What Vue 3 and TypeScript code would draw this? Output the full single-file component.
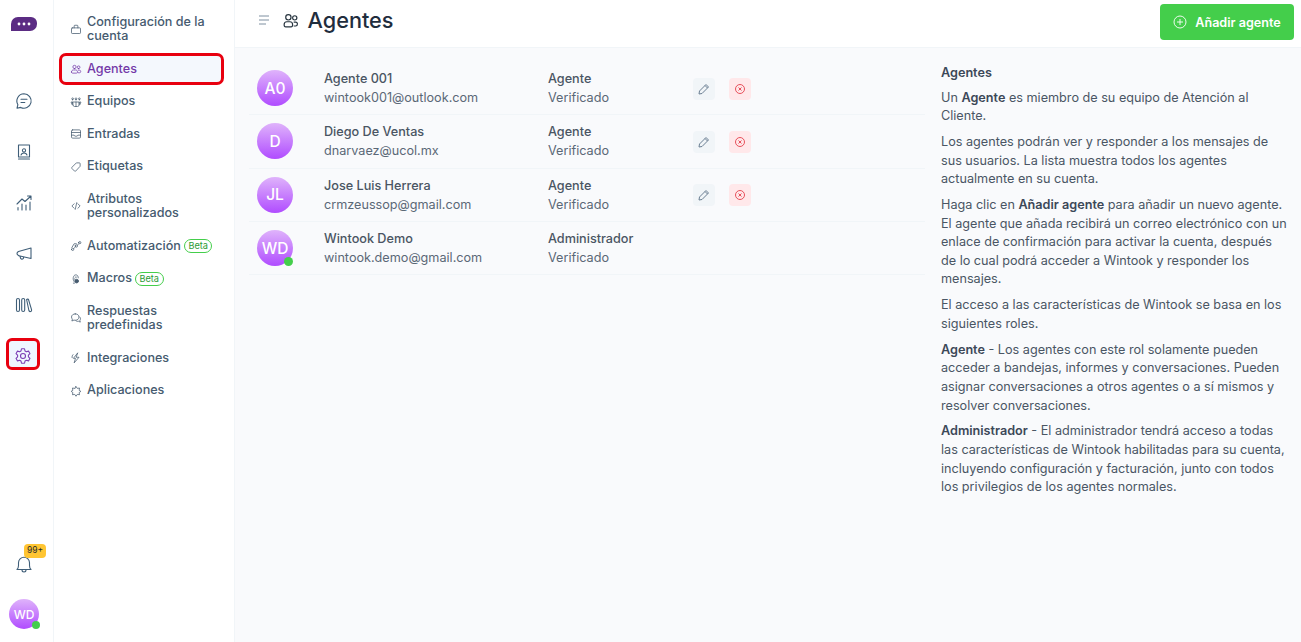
<script setup lang="ts">
interface Agent { initials: string; name: string; email: string; role: string; online?: boolean; actions: boolean }
const agents: Agent[] = [
  { initials: 'A0', name: 'Agente 001', email: 'wintook001@outlook.com', role: 'Agente', actions: true },
  { initials: 'D', name: 'Diego De Ventas', email: 'dnarvaez@ucol.mx', role: 'Agente', actions: true },
  { initials: 'JL', name: 'Jose Luis Herrera', email: 'crmzeussop@gmail.com', role: 'Agente', actions: true },
  { initials: 'WD', name: 'Wintook Demo', email: 'wintook.demo@gmail.com', role: 'Administrador', online: true, actions: false },
]
const menu = [
  { label: 'Configuración de la cuenta', icon: 'M3 6.500h10a1 1 0 0 1 1 1V13a1 1 0 0 1-1 1H3a1 1 0 0 1-1-1V7.500a1 1 0 0 1 1-1zM5.500 6.500V4a1 1 0 0 1 1-1h3a1 1 0 0 1 1 1v2.500' },
  { label: 'Agentes', active: true, icon: 'M6 7.500a2.200 2.200 0 1 0 0-4.400 2.200 2.200 0 0 0 0 4.400zM11.500 7.500a1.800 1.800 0 1 0 0-3.600 1.800 1.800 0 0 0 0 3.600zM2 12c0-1.600 1-2.700 2.500-2.700h3C9 9.300 10 10.400 10 12s-1 1.500-1.500 1.500h-5C2.500 13.500 2 13 2 12zM11 9.500h1.500c1 0 1.800.8 1.800 1.800s-.6 1.700-1.500 1.700H11' },
  { label: 'Equipos', icon: 'M4 8h8v4a2 2 0 0 1-2 2H6a2 2 0 0 1-2-2zM8 8v6M2 8h1.500v3.500H2.800A1 1 0 0 1 2 10.500zM14 8h-1.500v3.500h.7a1 1 0 0 0 .8-1zM3.500 5a1.200 1.200 0 1 0 0-2.400 1.200 1.200 0 0 0 0 2.400zM8 5a1.200 1.200 0 1 0 0-2.400A1.200 1.200 0 0 0 8 5zM12.500 5a1.200 1.200 0 1 0 0-2.400 1.200 1.200 0 0 0 0 2.400z' },
  { label: 'Entradas', icon: 'M3.500 2.500h9a1.500 1.500 0 0 1 1.500 1.500v8a1.500 1.500 0 0 1-1.500 1.500h-9A1.500 1.500 0 0 1 2 12V4a1.500 1.500 0 0 1 1.500-1.500zM2 6h12M2 9.500h3.500a2.500 1.500 0 0 0 5 0H14' },
  { label: 'Etiquetas', icon: 'M9 2.500h3.500a1 1 0 0 1 1 1V7L7.500 13.500a1 1 0 0 1-1.400 0L2.500 9.900a1 1 0 0 1 0-1.400z' },
  { label: 'Atributos personalizados', icon: 'M5.500 5 2.500 8l3 3M10.500 5l3 3-3 3M9 3.500 7 12.500' },
  { label: 'Automatización', beta: true, icon: 'M2 12.500a1.500 1.500 0 1 0 3 0 1.500 1.500 0 0 0-3 0zM7 8a1.500 1.500 0 1 0 3 0 1.500 1.500 0 0 0-3 0zM11.500 3.500a1.500 1.500 0 1 0 3 0 1.500 1.500 0 0 0-3 0zM4.800 11.500l2.400-2.200M9.800 6.800l2-1.800M2.500 10 5.500 5h3' },
  { label: 'Macros', beta: true, icon: 'M5 11c-1.500-3-1-8 2.500-8.500 2.500-.2 3.500 1.800 3.500 4M4.500 13.500h1.500M7 5.500h1.500M5.500 8h1', dot: true },
  { label: 'Respuestas predefinidas', icon: 'M7 2.500c-2.800 0-5 1.800-5 4.200 0 1.100.5 2.100 1.200 2.800L2.500 12l2.800-1.200c.5.100 1.100.2 1.700.2 2.800 0 5-1.800 5-4.300S9.800 2.500 7 2.500zM12.800 6.500c.8.700 1.200 1.500 1.200 2.500 0 .8-.3 1.500-.8 2.100l.5 2.400-2.300-1.100c-1.200.3-2.600 0-3.600-.7' },
  { label: 'Integraciones', icon: 'M10 1.500 4.500 8.500h2.800L5.500 14.500 12 7H8.700zM4 3.500C3 4.500 2.500 6 2.800 7.500' },
  { label: 'Aplicaciones', icon: 'M8 2l1.700 2.500 3-.5-.5 3L14.500 8.500l-2.300 1.500.5 3-3-.5L8 15l-1.700-2.500-3 .5.5-3L1.500 8.500 3.800 7l-.5-3 3 .5z' },
]
</script>

<template>
  <div class="app">
    <nav class="rail">
      <svg class="logo" width="28" height="18" viewBox="0 0 28 18"><path d="M8 1h13a6 6 0 0 1 6 6v1a7 7 0 0 1-7 7H1V8a7 7 0 0 1 7-7z" fill="#5b2c83"/><circle cx="9" cy="8" r="1.400" fill="#fff"/><circle cx="14" cy="8" r="1.400" fill="#fff"/><circle cx="19" cy="8" r="1.400" fill="#fff"/></svg>
      <div class="rail-top">
        <span class="rail-btn"><svg width="18" height="18" viewBox="0 0 18 18" class="ri"><path d="M9 1.800a7.200 7.200 0 1 1-3.300 13.600L2 16.200l.9-3.500A7.200 7.200 0 0 1 9 1.800zM6 7.200h6M6 10.500h3.800"/></svg></span>
        <span class="rail-btn"><svg width="18" height="18" viewBox="0 0 18 18" class="ri"><path d="M3.500 2h11v12h-11zM3.500 16h11M9 5.800a1.600 1.600 0 1 0 0 3.200 1.600 1.600 0 0 0 0-3.200zM6 12c.5-1.500 1.500-2 3-2s2.500.5 3 2"/></svg></span>
        <span class="rail-btn"><svg width="18" height="18" viewBox="0 0 18 18" class="ri"><path d="M2 10l5-5 3 2.500L16 2M12.500 2H16v3.500M3 16v-2.500M7 16V10M11 16v-5M15 16V8"/></svg></span>
        <span class="rail-btn"><svg width="18" height="18" viewBox="0 0 18 18" class="ri"><path d="M16 3v10.500L5 11a2.500 2.500 0 0 1-1.500-.5C2.500 10 2 9 2 8.500S2.500 7 3.500 6.500zM5 11.200l.5 1.800c.3 1 1.300 1.300 2.200 1 .7-.3 1-1 .8-1.800"/></svg></span>
        <span class="rail-btn"><svg width="18" height="18" viewBox="0 0 18 18" class="ri"><rect x="1.500" y="2.500" width="3" height="13" rx="1.500"/><rect x="6.700" y="2.500" width="3" height="13" rx="1.500"/><path d="M11.600 3.500c.8-.6 1.700-.4 2 .3l3 10c.2.800-.3 1.500-1 1.700-.8.200-1.500-.2-1.700-1z"/></svg></span>
        <span class="rail-btn gear"><svg width="18" height="18" viewBox="0 0 18 18" class="ri"><path d="M7.500 1.800h3l.5 2.100 1.400.8 2.100-.6 1.500 2.600-1.600 1.500v1.600l1.600 1.500-1.500 2.600-2.100-.6-1.400.8-.5 2.100h-3l-.5-2.100-1.400-.8-2.100.6-1.500-2.600L3.600 9.800V8.200L2 6.700l1.500-2.600 2.100.6L7 3.900z"/><circle cx="9" cy="9" r="2.500"/></svg></span>
      </div>
      <div class="rail-bottom">
        <span class="bell">
          <svg width="18" height="20" viewBox="0 0 18 20" class="ri"><path d="M2 14.500c1-1 1.500-2 1.500-4V7.800a5.500 5.500 0 0 1 11 0v2.700c0 2 .5 3 1.500 4zM7 15c0 2.600 4 2.600 4 0"/></svg>
          <span class="badge">99+</span>
        </span>
        <span class="me">WD<i class="dot"></i></span>
      </div>
    </nav>

    <aside class="side">
      <a v-for="m in menu" :key="m.label" class="item" :class="{ active: m.active }">
        <svg width="12" height="12" viewBox="0 0 16 16" class="mi"><path :d="m.icon"/><circle v-if="m.dot" cx="8.800" cy="10.800" r="2.500" fill="currentColor"/></svg>
        <span class="lbl" :class="{ wide: !m.beta }">{{ m.label }}</span>
        <span v-if="m.beta" class="beta">Beta</span>
      </a>
    </aside>

    <div class="main">
      <header class="head">
        <svg width="14" height="14" viewBox="0 0 14 14" class="burger"><path d="M2 3h10M2 7h10M2 11h7"/></svg>
        <svg width="17" height="17" viewBox="0 0 16 16" class="title-ic"><path d="M6 7.500a2.500 2.500 0 1 0 0-5 2.500 2.500 0 0 0 0 5zM12 7.500a2 2 0 1 0 0-4 2 2 0 0 0 0 4zM2 12c0-1.800 1-2.800 2.500-2.800h3C9 9.200 10 10.200 10 12s-1 2-1.500 2h-5C2.500 14 2 13.500 2 12zM11 9.500h1.800c1 0 1.700.8 1.700 1.900s-.7 1.800-1.700 1.800H11"/></svg>
        <h1>Agentes</h1>
        <button class="add">
          <svg width="14" height="14" viewBox="0 0 14 14"><circle cx="7" cy="7" r="6"/><path d="M7 4v6M4 7h6"/></svg>
          Añadir agente
        </button>
      </header>
      <div class="body">
        <section class="list">
          <div v-for="a in agents" :key="a.email" class="row">
            <span class="av">{{ a.initials }}<i v-if="a.online" class="dot big"></i></span>
            <div class="who"><b>{{ a.name }}</b><span>{{ a.email }}</span></div>
            <div class="role"><b>{{ a.role }}</b><span>Verificado</span></div>
            <div v-if="a.actions" class="acts">
              <span class="act edit"><svg width="12" height="12" viewBox="0 0 12 12"><path d="M8 1.500l2.500 2.500L4 10.500l-3 .5.500-3zM7 2.500 9.500 5"/></svg></span>
              <span class="act del"><svg width="12" height="12" viewBox="0 0 12 12"><circle cx="6" cy="6" r="4.500"/><path d="M4.500 4.500l3 3M7.500 4.500l-3 3"/></svg></span>
            </div>
          </div>
        </section>
        <section class="help">
          <h2>Agentes</h2>
          <p>Un <b>Agente</b> es miembro de su equipo de Atención al Cliente.</p>
          <p>Los agentes podrán ver y responder a los mensajes de sus usuarios. La lista muestra todos los agentes actualmente en su cuenta.</p>
          <p>Haga clic en <b>Añadir agente</b> para añadir un nuevo agente. El agente que añada recibirá un correo electrónico con un enlace de confirmación para activar la cuenta, después de lo cual podrá acceder a Wintook y responder los mensajes.</p>
          <p>El acceso a las características de Wintook se basa en los siguientes roles.</p>
          <p><b>Agente</b> - Los agentes con este rol solamente pueden acceder a bandejas, informes y conversaciones. Pueden asignar conversaciones a otros agentes o a sí mismos y resolver conversaciones.</p>
          <p><b>Administrador</b> - El administrador tendrá acceso a todas las características de Wintook habilitadas para su cuenta, incluyendo configuración y facturación, junto con todos los privilegios de los agentes normales.</p>
        </section>
      </div>
    </div>
  </div>
</template>

<style>
html, body { margin: 0; background: #fff; }
</style>

<style scoped>
.app { display: flex; width: 1301px; height: 642px; overflow: hidden; font-family: Inter, "Liberation Sans", sans-serif; color: #3c4858; }
.rail { width: 53px; border-right: 1px solid #f1f5f8; display: flex; flex-direction: column; align-items: flex-start; flex: none; box-sizing: content-box; }
.logo { margin: 16px 0 0 10px; }
.rail-top { margin: 51px 0 0 7px; display: flex; flex-direction: column; gap: 19px; }
.rail-btn { width: 34px; height: 32px; display: flex; align-items: center; justify-content: center; box-sizing: border-box; }
.ri { fill: none; stroke: #3f5e78; stroke-width: 1.100; stroke-linecap: round; stroke-linejoin: round; }
.gear { background: #eff6ff; border: 3px solid #e8000f; border-radius: 6px; margin: -2px 0 0 -1px; padding-top: 3px; }
.gear .ri { stroke: #7c3fb5; }
.rail-bottom { margin-top: auto; width: 48px; display: flex; flex-direction: column; align-items: center; margin-bottom: 13px; }
.bell { position: relative; display: block; height: 20px; margin-bottom: 24px; }
.badge { position: absolute; left: 9px; top: -11px; width: 22px; height: 14px; line-height: 13px; border-radius: 4px; background: #ffc532; color: #2b2b2b; font-size: 8.500px; text-align: center; }
.me, .av { position: relative; border-radius: 50%; background: linear-gradient(#dfb3fb, #b04cff); color: #fff; display: flex; align-items: center; justify-content: center; font-weight: 500; flex: none; }
.me { width: 30px; height: 30px; font-size: 12px; }
.dot { position: absolute; right: -1px; bottom: 0; width: 8px; height: 8px; border-radius: 50%; background: #44ce4b; }
.dot.big { width: 9px; height: 9px; right: 0; bottom: 0; }

.side { width: 181px; flex: none; border-right: 1px solid #f1f5f8; padding-top: 15px; box-sizing: border-box; display: flex; flex-direction: column; gap: 18.250px; }
.item { display: flex; align-items: center; margin-left: 8px; width: 158px; box-sizing: border-box; padding-left: 8px; font-size: 12.600px; font-weight: 500; line-height: 14.300px; color: #465b6f; }
.mi { flex: none; margin-right: 5px; fill: none; stroke: currentColor; stroke-width: 1; stroke-linecap: round; stroke-linejoin: round; }
.lbl.wide { width: 125px; }
.item.active { color: #7338a8; background: #f4f8fd; outline: 3px solid #e8000f; outline-offset: -1px; border-radius: 5px; margin: -7px 0 -7px 7px; padding: 7px 0 7px 9px; width: 161px; }
.beta { margin-left: 3px; border: 1px solid #44ce4b; color: #2b9a35; border-radius: 8px; font-size: 9.200px; line-height: 12px; padding: 0 3.500px; font-weight: 400; }

.main { flex: 1; min-width: 0; display: flex; flex-direction: column; background: #f9fafc; }
.head { height: 48px; flex: none; box-sizing: border-box; border-bottom: 1px solid #f1f5f8; background: #fff; display: flex; align-items: center; padding: 0 7px 7px 22px; }
.burger { stroke: #7f90a1; fill: none; stroke-width: 1; }
.title-ic { margin-left: 11px; fill: none; stroke: #27343f; stroke-width: 1.100; }
h1 { margin: 0 0 0 8.500px; font-size: 21.700px; font-weight: 500; line-height: 30px; color: #1f2d3d; }
.add { margin-left: auto; margin-top: 4px; width: 134px; height: 36px; border: 0; border-radius: 4px; background: #44ce4b; color: #fff; font: 600 12.600px Inter, "Liberation Sans", sans-serif; display: flex; align-items: center; justify-content: center; gap: 8px; padding: 0; }
.add svg { fill: none; stroke: #fff; stroke-width: .9; }
.body { display: flex; flex: 1; padding: 14px 0 0 14px; }
.list { width: 676px; flex: none; }
.row { display: flex; align-items: center; height: 53.300px; border-bottom: 1px solid #f1f5f8; box-sizing: border-box; padding-left: 8px; }
.av { width: 36px; height: 36px; font-size: 15.500px; }
.who, .role { display: flex; flex-direction: column; font-size: 12.650px; line-height: 19px; }
.who { margin-left: 31px; width: 224px; }
.role { width: 145px; }
.who b, .role b { font-weight: 500; color: #4a5563; }
.who span, .role span { color: #5b6877; }
.acts { display: flex; gap: 14px; margin-top: 1px; }
.act { width: 22px; height: 22px; border-radius: 4px; display: flex; align-items: center; justify-content: center; }
.act svg { fill: none; stroke-width: 1; }
.edit { background: #f1f5f8; }
.edit svg { stroke: #6b7f93; }
.del { background: #ffe8ea; }
.del svg { stroke: #e8505b; }
.help { margin-left: 16px; width: 348px; font-size: 12.650px; line-height: 18.600px; color: #4a5664; }
.help h2 { margin: 0; font-size: 12.650px; line-height: 18px; font-weight: 600; color: #3c4858; padding: 1.500px 0 7px; }
.help p { margin: 0 0 7.300px; }
.help b { font-weight: 600; color: #3c4858; }
</style>
